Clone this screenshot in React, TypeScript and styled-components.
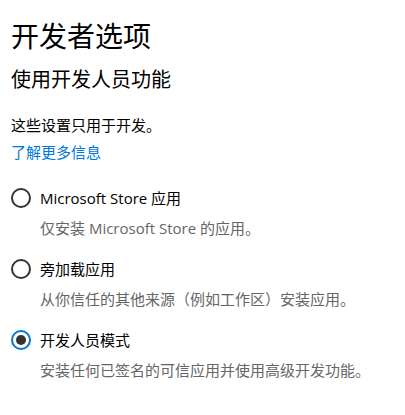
import React from "react";
import styled, { createGlobalStyle } from "styled-components";

const Global = createGlobalStyle`
  html, body { margin: 0; padding: 0; background: #ffffff; }
  body {
    font-family: "Segoe UI", "Open Sans", "Noto Sans CJK SC", sans-serif;
    color: #000;
  }
`;

const Page = styled.div`
  padding: 15px 0 0 11px;
  display: flex;
  flex-direction: column;
`;

const Title = styled.h1`
  margin: 0;
  font-family: "Noto Sans CJK SC", sans-serif;
  font-size: 28px;
  font-weight: 400;
  line-height: 40px;
  color: #000;
`;

const Subtitle = styled.h2`
  margin: 10px 0 0 0;
  font-family: "Noto Sans CJK SC", sans-serif;
  font-size: 20px;
  font-weight: 400;
  line-height: 28px;
  color: #000;
`;

const Body = styled.p`
  margin: 21px 0 0 0;
  font-family: "Noto Sans CJK SC", sans-serif;
  font-size: 15px;
  line-height: 22px;
  color: #000;
`;

const Link = styled.a`
  margin-top: 5px;
  font-family: "Noto Sans CJK SC", sans-serif;
  font-size: 15px;
  line-height: 22px;
  color: #0078d7;
  text-decoration: none;
  align-self: flex-start;
`;

const Options = styled.div`
  margin-top: 24px;
  display: flex;
  flex-direction: column;
  gap: 19px;
`;

const Option = styled.label`
  display: grid;
  grid-template-columns: 20px 1fr;
  column-gap: 9px;
  row-gap: 8px;
  align-items: center;
`;

const Radio = styled.span<{ $checked?: boolean }>`
  box-sizing: border-box;
  width: 20px;
  height: 20px;
  border-radius: 50%;
  border: 2px solid ${(p) => (p.$checked ? "#0078d7" : "#333333")};
  display: flex;
  align-items: center;
  justify-content: center;
  &::after {
    content: "";
    display: ${(p) => (p.$checked ? "block" : "none")};
    width: 10px;
    height: 10px;
    border-radius: 50%;
    background: #333333;
  }
`;

const Label = styled.span`
  font-family: "Segoe UI", "Open Sans", "Noto Sans CJK SC", sans-serif;
  font-size: 15px;
  line-height: 22px;
  color: #000;
`;

const Desc = styled.span`
  grid-column: 2;
  font-family: "Segoe UI", "Open Sans", "Noto Sans CJK SC", sans-serif;
  font-size: 15px;
  line-height: 22px;
  color: #666666;
`;

const options = [
  { label: "Microsoft Store 应用", desc: "仅安装 Microsoft Store 的应用。", checked: false },
  { label: "旁加载应用", desc: "从你信任的其他来源（例如工作区）安装应用。", checked: false },
  { label: "开发人员模式", desc: "安装任何已签名的可信应用并使用高级开发功能。", checked: true },
];

export default function App() {
  return (
    <>
      <Global />
      <Page>
        <Title>开发者选项</Title>
        <Subtitle>使用开发人员功能</Subtitle>
        <Body>这些设置只用于开发。</Body>
        <Link href="#">了解更多信息</Link>
        <Options>
          {options.map((o) => (
            <Option key={o.label}>
              <Radio $checked={o.checked} />
              <Label>{o.label}</Label>
              <Desc>{o.desc}</Desc>
            </Option>
          ))}
        </Options>
      </Page>
    </>
  );
}
